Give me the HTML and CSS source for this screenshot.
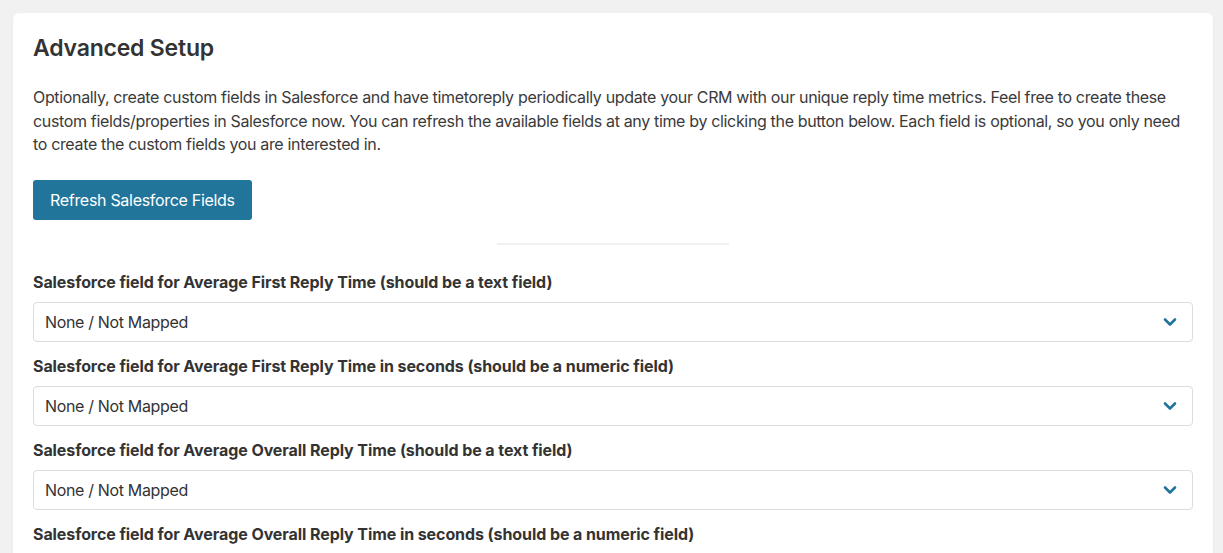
FILE: index.html
```html
<!DOCTYPE html>
<html lang="en">
<head>
<meta charset="utf-8">
<title>Advanced Setup</title>
<link rel="stylesheet" href="styles.css">
</head>
<body>
<div class="card">
  <h2 class="title">Advanced Setup</h2>
  <p class="intro">Optionally, create custom fields in Salesforce and have timetoreply periodically update your CRM with our unique reply time metrics. Feel free to create these custom fields/properties in Salesforce now. You can refresh the available fields at any time by clicking the button below. Each field is optional, so you only need to create the custom fields you are interested in.</p>
  <button class="btn" type="button">Refresh Salesforce Fields</button>
  <hr class="divider">
  <div class="field">
    <label class="label">Salesforce field for Average First Reply Time (should be a text field)</label>
    <div class="select"><span>None / Not Mapped</span><svg class="chev" viewBox="0 0 14 10" width="14" height="10"><path d="M2 2.5 L7 7.5 L12 2.5" fill="none" stroke="currentColor" stroke-width="2.6" stroke-linecap="round" stroke-linejoin="round"/></svg></div>
  </div>
  <div class="field">
    <label class="label">Salesforce field for Average First Reply Time in seconds (should be a numeric field)</label>
    <div class="select"><span>None / Not Mapped</span><svg class="chev" viewBox="0 0 14 10" width="14" height="10"><path d="M2 2.5 L7 7.5 L12 2.5" fill="none" stroke="currentColor" stroke-width="2.6" stroke-linecap="round" stroke-linejoin="round"/></svg></div>
  </div>
  <div class="field">
    <label class="label">Salesforce field for Average Overall Reply Time (should be a text field)</label>
    <div class="select"><span>None / Not Mapped</span><svg class="chev" viewBox="0 0 14 10" width="14" height="10"><path d="M2 2.5 L7 7.5 L12 2.5" fill="none" stroke="currentColor" stroke-width="2.6" stroke-linecap="round" stroke-linejoin="round"/></svg></div>
  </div>
  <div class="field">
    <label class="label">Salesforce field for Average Overall Reply Time in seconds (should be a numeric field)</label>
    <div class="select"><span>None / Not Mapped</span><svg class="chev" viewBox="0 0 14 10" width="14" height="10"><path d="M2 2.5 L7 7.5 L12 2.5" fill="none" stroke="currentColor" stroke-width="2.6" stroke-linecap="round" stroke-linejoin="round"/></svg></div>
  </div>
</div>
</body>
</html>
```
FILE: styles.css
```css
* { box-sizing: border-box; }
html, body { margin: 0; }
body {
  background: #f1f1f1;
  padding: 13px 10px 13px 13px;
  font-family: Inter, "Noto Sans", sans-serif;
  color: #3a3a3a;
  font-size: 16px;
  letter-spacing: -0.34px;
}
.card {
  background: #fff;
  border-radius: 6px;
  box-shadow: 0 1px 3px rgba(0,0,0,0.05);
  padding: 20px 20px 40px;
}
.title {
  margin: 0 0 23px;
  font-size: 23px;
  line-height: 30px;
  font-weight: 600;
  color: #333;
  letter-spacing: -0.2px;
}
.intro {
  margin: 0 0 23px;
  line-height: 23.5px;
  font-size: 16px;
}
.btn {
  display: block;
  height: 40px;
  padding: 0 17px;
  background: #21759b;
  color: #fff;
  border: none;
  border-radius: 3px;
  font: inherit;
  font-size: 16px;
  letter-spacing: -0.3px;
}
.divider {
  width: 232px;
  margin: 23px auto 25px;
  border: none;
  height: 2px;
  background: #f1f1f1;
}
.field { margin-bottom: 12px; }
.label {
  display: block;
  font-weight: 700;
  line-height: 24px;
  margin-bottom: 8px;
  color: #333;
  letter-spacing: -0.08px;
}
.select {
  display: flex;
  align-items: center;
  justify-content: space-between;
  height: 40px;
  border: 1px solid #dcdcdc;
  border-radius: 4px;
  padding: 0 15px 0 11px;
  color: #333;
}
.chev { color: #21759b; }
```
